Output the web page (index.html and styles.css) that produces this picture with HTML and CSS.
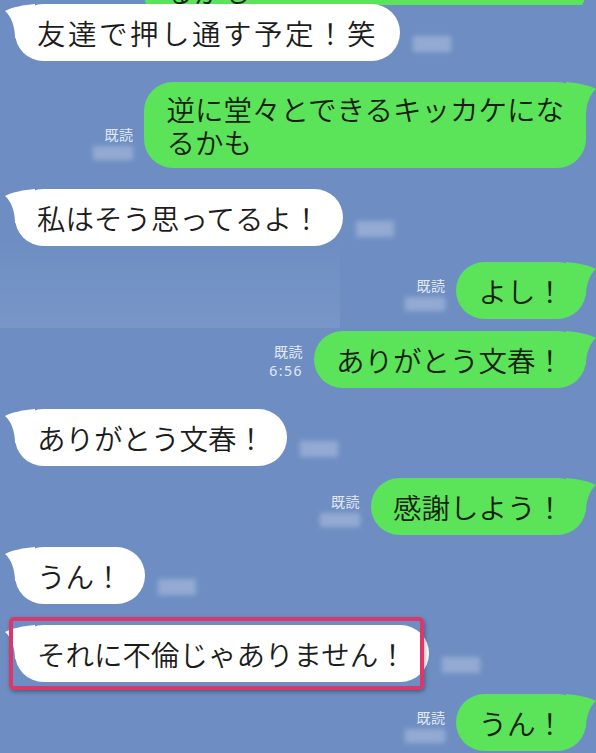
FILE: index.html
```html
<!DOCTYPE html>
<html lang="ja">

<head>
    <meta charset="UTF-8">
    <title>トーク</title>
    <link rel="stylesheet" href="styles.css">
</head>

<body>
    <div class="chat">
        <!-- 前のスクショの切れ端 -->
        <div class="cut">
            <div class="bubble bubble--me">るかも</div>
        </div>

        <div class="row row--them row--first">
            <div class="bubble bubble--them bubble--wide">友達で押し通す予定！笑</div>
            <span class="stamp"></span>
        </div>

        <div class="row row--me row--far">
            <div class="meta"><span>既読</span><span class="stamp"></span></div>
            <div class="bubble bubble--me bubble--multi">逆に堂々とできるキッカケにな<br>るかも</div>
        </div>

        <div class="row row--them row--far">
            <div class="bubble bubble--them">私はそう思ってるよ！</div>
            <span class="stamp"></span>
        </div>

        <div class="row row--me row--mid">
            <div class="meta"><span>既読</span><span class="stamp"></span></div>
            <div class="bubble bubble--me">よし！</div>
        </div>

        <div class="row row--me">
            <div class="meta"><span>既読</span><span class="time">6:56</span></div>
            <div class="bubble bubble--me">ありがとう文春！</div>
        </div>

        <div class="row row--them row--far">
            <div class="bubble bubble--them">ありがとう文春！</div>
            <span class="stamp"></span>
        </div>

        <div class="row row--me">
            <div class="meta"><span>既読</span><span class="stamp"></span></div>
            <div class="bubble bubble--me">感謝しよう！</div>
        </div>

        <div class="row row--them">
            <div class="bubble bubble--them">うん！</div>
            <span class="stamp"></span>
        </div>

        <div class="row row--them row--far">
            <div class="bubble bubble--them bubble--marked">それに不倫じゃありません！</div>
            <span class="stamp"></span>
        </div>

        <div class="row row--me">
            <div class="meta"><span>既読</span><span class="stamp"></span></div>
            <div class="bubble bubble--me">うん！</div>
        </div>
    </div>
</body>

</html>
```

FILE: styles.css
```css
* {
    margin: 0;
    padding: 0;
    box-sizing: border-box;
}

html,
body {
    background-color: #6e8ec3;
}

body {
    font-family: "Noto Sans CJK JP", "Noto Sans", sans-serif;
    width: 596px;
    height: 753px;
    overflow: hidden;
}

.chat {
    height: 753px;
    /* スクショのつなぎ目の明るい帯 */
    background: linear-gradient(rgba(255, 255, 255, 0), rgba(255, 255, 255, .07)) 0 240px / 340px 88px no-repeat,
        #6e8ec3;
}

/* 上の切れた吹き出し */
.cut {
    height: 5px;
    overflow: hidden;
    display: flex;
    flex-direction: column;
    justify-content: flex-end;
    align-items: flex-end;
    padding-right: 10px;
}

.cut .bubble {
    width: 443px;
    margin-bottom: -14px;
}

.row {
    display: flex;
    align-items: flex-end;
    margin-top: 12px;
}

.row--first {
    margin-top: -1px;
}

.row--mid {
    margin-top: 16px;
}

.row--far {
    margin-top: 21px;
}

.row--them {
    padding-left: 15px;
}

.row--me {
    justify-content: flex-end;
    padding-right: 10px;
}

.bubble {
    position: relative;
    font-size: 28.5px;
    font-weight: 350;
    line-height: 33px;
    padding: 12px 22px;
    border-radius: 29px;
    color: #1c1c1c;
    white-space: nowrap;
}

.bubble--multi {
    padding: 10px 22px;
}

.bubble--wide {
    letter-spacing: 2.5px;
}

.bubble--them {
    background-color: #fff;
}

.bubble--me {
    background-color: #5be35a;
    color: #15210d;
}

/* しっぽ */
.bubble::before {
    content: "";
    position: absolute;
    top: 0;
    width: 36px;
    height: 34px;
    background: inherit;
}

.bubble--them::before {
    left: -10px;
    clip-path: path("M0 7 C8 3 18 1 30 0 L30 34 L10 34 C10 22 6 12 0 7 Z");
}

.bubble--me::before {
    right: -10px;
    clip-path: path("M36 7 C28 3 18 1 6 0 L6 34 L26 34 C26 22 30 12 36 7 Z");
}

/* ピンクの囲み */
.bubble--marked::after {
    content: "";
    position: absolute;
    left: -6px;
    top: -8px;
    right: 5px;
    bottom: -8px;
    border: 4px solid #d9386d;
    border-radius: 5px;
    box-shadow: 1px 2px 4px rgba(0, 0, 0, .35);
}

.meta {
    display: flex;
    flex-direction: column;
    align-items: flex-end;
    margin: 0 11px 8px 0;
    font-size: 14px;
    line-height: 19px;
    letter-spacing: .5px;
    color: #e3e9f4;
}

.time {
    font-family: "Noto Sans", sans-serif;
    font-size: 14px;
    letter-spacing: 1.5px;
}

/* ぼかした時刻 */
.stamp {
    display: block;
    width: 38px;
    height: 16px;
    margin: 0 0 9px 13px;
    background-color: rgba(235, 240, 250, .3);
    filter: blur(2.5px);
}

.meta .stamp {
    width: 40px;
    height: 14px;
    margin: 2px 0 0;
}
```
